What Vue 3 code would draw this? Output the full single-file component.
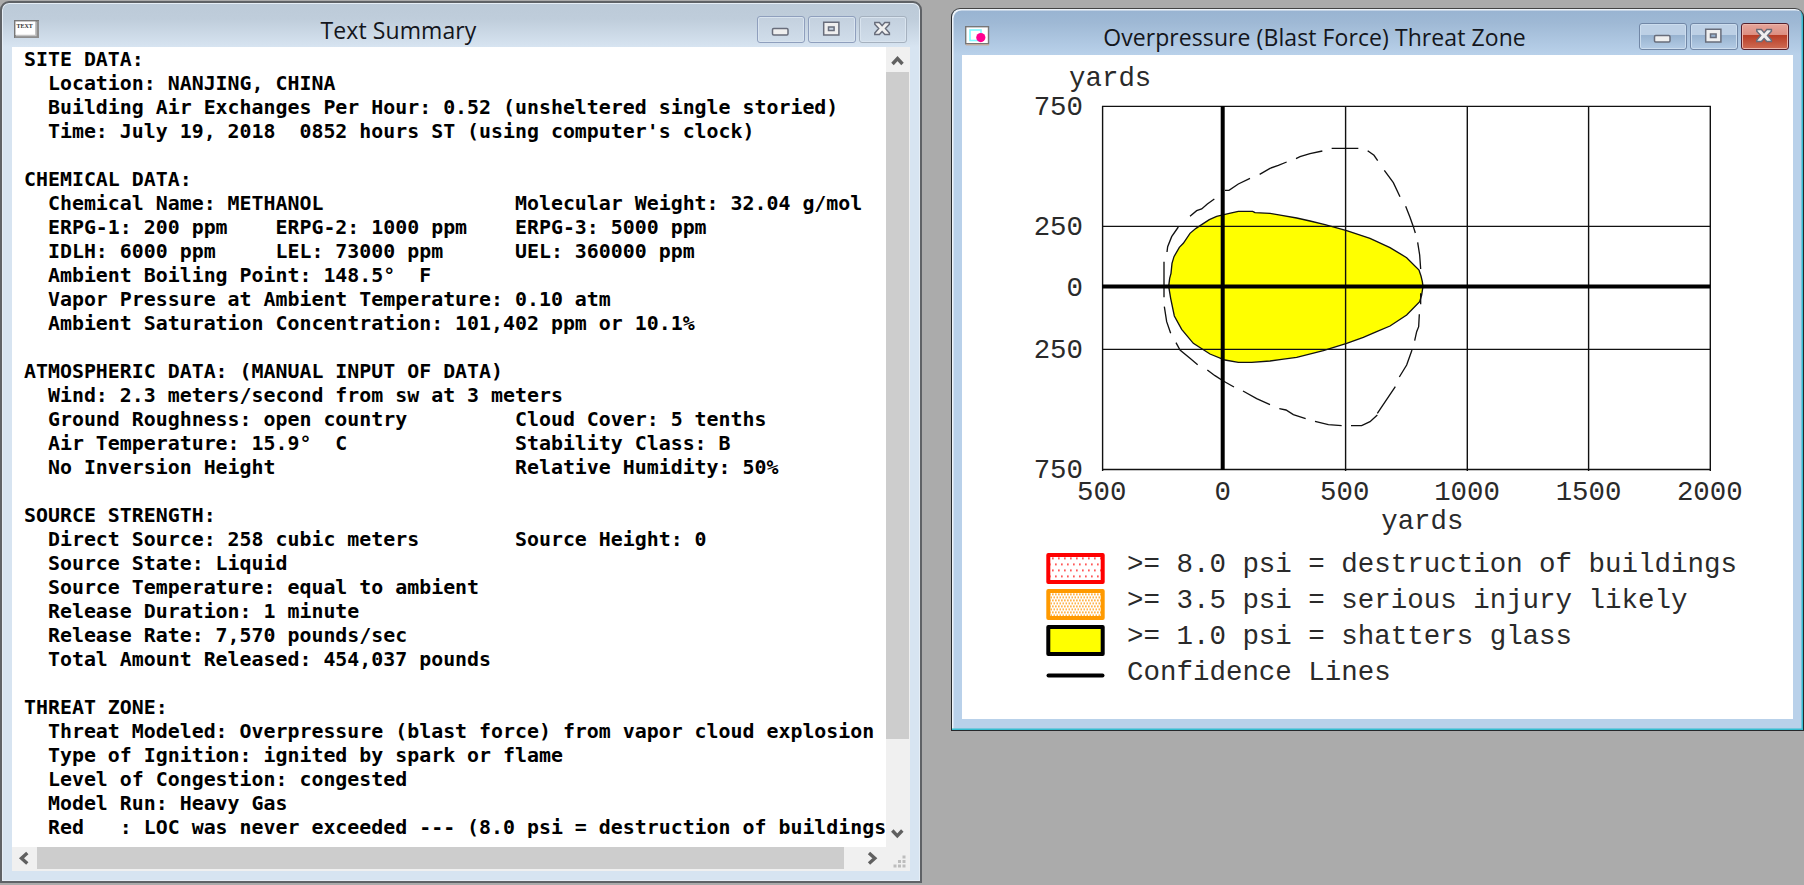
<script setup>
const summary = `SITE DATA:
  Location: NANJING, CHINA
  Building Air Exchanges Per Hour: 0.52 (unsheltered single storied)
  Time: July 19, 2018  0852 hours ST (using computer's clock)

CHEMICAL DATA:
  Chemical Name: METHANOL                Molecular Weight: 32.04 g/mol
  ERPG-1: 200 ppm    ERPG-2: 1000 ppm    ERPG-3: 5000 ppm
  IDLH: 6000 ppm     LEL: 73000 ppm      UEL: 360000 ppm
  Ambient Boiling Point: 148.5°  F
  Vapor Pressure at Ambient Temperature: 0.10 atm
  Ambient Saturation Concentration: 101,402 ppm or 10.1%

ATMOSPHERIC DATA: (MANUAL INPUT OF DATA)
  Wind: 2.3 meters/second from sw at 3 meters
  Ground Roughness: open country         Cloud Cover: 5 tenths
  Air Temperature: 15.9°  C              Stability Class: B
  No Inversion Height                    Relative Humidity: 50%

SOURCE STRENGTH:
  Direct Source: 258 cubic meters        Source Height: 0
  Source State: Liquid
  Source Temperature: equal to ambient
  Release Duration: 1 minute
  Release Rate: 7,570 pounds/sec
  Total Amount Released: 454,037 pounds

THREAT ZONE:
  Threat Modeled: Overpressure (blast force) from vapor cloud explosion
  Type of Ignition: ignited by spark or flame
  Level of Congestion: congested
  Model Run: Heavy Gas
  Red   : LOC was never exceeded --- (8.0 psi = destruction of buildings`

const yLabels = [
  { t: '750', y: 114.5 },
  { t: '250', y: 234.5 },
  { t: '0', y: 295.7 },
  { t: '250', y: 357.8 },
  { t: '750', y: 477.5 },
]
const xLabels = [
  { t: '500', x: 1101.7 },
  { t: '0', x: 1222.7 },
  { t: '500', x: 1344.7 },
  { t: '1000', x: 1467 },
  { t: '1500', x: 1588.5 },
  { t: '2000', x: 1709.8 },
]
const legend = [
  { kind: 'red', t: '>= 8.0 psi = destruction of buildings' },
  { kind: 'orange', t: '>= 3.5 psi = serious injury likely' },
  { kind: 'yellow', t: '>= 1.0 psi = shatters glass' },
  { kind: 'line', t: 'Confidence Lines' },
]
const windowButtons = ['min', 'max', 'close']
</script>

<template>
  <div class="desktop">
    <section class="win summary">
      <header class="bar">
        <svg class="icon" width="26" height="19" viewBox="0 0 26 19">
          <rect x="0" y="0" width="25" height="18" fill="#8d8d8d" />
          <path d="M0 18V0H25" fill="none" stroke="#777" stroke-width="2" />
          <rect x="1.5" y="1.5" width="20" height="13.5" fill="#fff" />
          <path d="M22 2V15.5H2" fill="none" stroke="#c4c4c4" stroke-width="1.3" />
          <text x="2.5" y="7.6" class="icon-text">TEXT</text>
        </svg>
        <h1 class="title">Text Summary</h1>
        <div class="controls">
          <span v-for="b in windowButtons" :key="b" class="ctl" :class="b">
            <svg width="48" height="27" viewBox="0 0 48 27">
              <rect v-if="b === 'min'" x="15.5" y="12.5" width="15.5" height="6.5" rx="1.2" class="glyph" />
              <path v-else-if="b === 'max'" d="M15.7 6.3h15.2v12.6H15.7zM20.5 11v3.6h5.6V11z" fill-rule="evenodd" class="glyph" />
              <path v-else d="M15.8 6.6h4.6l2.7 3.1 2.7-3.1h4.6v1.7l-3.9 4.3 3.9 4.4v1.6h-4.6l-2.7-3-2.7 3h-4.6V17l3.9-4.4-3.9-4.3z" class="glyph" />
            </svg>
          </span>
        </div>
      </header>
      <div class="client">
        <pre class="report">{{ summary }}</pre>
        <div class="vscroll">
          <svg class="arrow up" width="24" height="25" viewBox="0 0 24 25"><path d="M6.5 17L11.5 11.5L16.5 17" /></svg>
          <div class="vthumb"></div>
          <svg class="arrow down" width="24" height="25" viewBox="0 0 24 25"><path d="M6.3 8.5L11.3 13.8L16.3 8.5" /></svg>
        </div>
        <div class="hscroll">
          <svg class="arrow" width="25" height="23" viewBox="0 0 25 23"><path d="M15.3 6L9.5 11.2L15.3 16.4" /></svg>
          <div class="hthumb"></div>
          <svg class="arrow" width="42" height="23" viewBox="0 0 42 23"><path d="M25 6L30.8 11.2L25 16.4" /></svg>
        </div>
        <svg class="grip" width="24" height="23" viewBox="0 0 24 23">
          <g fill="#bdbdbd">
            <rect x="16.5" y="8.5" width="3" height="3" />
            <rect x="12" y="13" width="3" height="3" /><rect x="16.5" y="13" width="3" height="3" />
            <rect x="7.5" y="17.5" width="3" height="3" /><rect x="12" y="17.5" width="3" height="3" /><rect x="16.5" y="17.5" width="3" height="3" />
          </g>
        </svg>
      </div>
    </section>

    <section class="win threat">
      <header class="bar">
        <svg class="icon" width="25" height="20" viewBox="0 0 25 20">
          <rect x="0.7" y="0.7" width="22.8" height="17" fill="#fff" stroke="#777" stroke-width="1.4" />
          <path d="M1 18.8H24" stroke="#c9aa94" stroke-width="1.2" />
          <rect x="5" y="4" width="11" height="10.5" fill="none" stroke="#7ff8ff" stroke-width="1.6" />
          <circle cx="15.8" cy="11.6" r="4.6" fill="#ff0090" />
        </svg>
        <h1 class="title">Overpressure (Blast Force) Threat Zone</h1>
        <div class="controls">
          <span v-for="b in windowButtons" :key="b" class="ctl" :class="b">
            <svg width="48" height="27" viewBox="0 0 48 27">
              <rect v-if="b === 'min'" x="15.5" y="12.5" width="15.5" height="6.5" rx="1.2" class="glyph" />
              <path v-else-if="b === 'max'" d="M15.7 6.3h15.2v12.6H15.7zM20.5 11v3.6h5.6V11z" fill-rule="evenodd" class="glyph" />
              <path v-else d="M15.8 6.6h4.6l2.7 3.1 2.7-3.1h4.6v1.7l-3.9 4.3 3.9 4.4v1.6h-4.6l-2.7-3-2.7 3h-4.6V17l3.9-4.4-3.9-4.3z" class="glyph" />
            </svg>
          </span>
        </div>
      </header>
      <div class="plot">
        <svg class="chart" width="829" height="491" viewBox="962 55 829 491">
          <g transform="translate(1020 80) scale(.33333)" class="zones">
            <path class="zone" d="M446 619L449 595 453 580 456 550 462 530 478 502 490 490 510 460 528 445 545 434 568 419 590 409 628 400 655 394 698 394 705 398 750 400 785 406 830 414 870 423 915 434 980 452 1050 475 1110 503 1160 533 1197 570 1203 588 1207 605 1209 619 1205 645 1199 665 1160 705 1110 738 1070 755 1030 772 980 790 910 812 830 832 785 838 750 843 695 847 655 847 615 840 570 822 520 790 485 748 463 708 452 655Z" />
            <path class="dash" d="M510 409L530 392 545 387 562 372 583 357M615 331L627 331 655 312 690 295M719 283L750 265 775 256 800 246M828 236L840 230 870 221 907 213M935 205L1015 205M1043 212L1062 226 1073 242M1093 271L1120 308 1140 350M1157 379L1170 412 1180 440 1186 459M1193 487L1199 525 1202 567M1202 640L1202 673M1198 703L1196 740 1190 755 1184 782M1176 810L1160 855 1138 891M1126 920L1072 1000M1072 1005L1050 1025 1025 1037 993 1037M965 1037L925 1034 885 1024M857 1016L820 1004 798 990 778 986M750 974L710 956 669 933M642 921L610 903 585 887 562 870M533 854L510 835 480 810 468 788M452 760L440 725 433 680M432 652L432 545M441 516L443 500 455 470 475 441" />
          </g>
          <g class="grid">
            <path d="M1102.6 106V471M1345.6 106V471M1467.3 106V471M1588.6 106V471M1710.3 106V471" />
            <path d="M1102 106.4H1710.9M1102 226.4H1710.9M1102 349.4H1710.9M1102 469.5H1710.9" />
            <path class="axis" d="M1222.7 106V470M1102 286.4H1710" />
          </g>
          <g class="label">
            <text x="1110.2" y="86.2" text-anchor="middle">yards</text>
            <text v-for="(l, i) in yLabels" :key="'y' + i" x="1083" :y="l.y" text-anchor="end">{{ l.t }}</text>
            <text v-for="(l, i) in xLabels" :key="'x' + i" :x="l.x" y="500.2" text-anchor="middle">{{ l.t }}</text>
            <text x="1422.3" y="528.8" text-anchor="middle">yards</text>
          </g>
        </svg>
        <ul class="legend">
          <li v-for="item in legend" :key="item.kind">
            <svg width="60" height="36" viewBox="0 0 60 36">
              <defs>
                <pattern id="dots-red" width="6" height="12" patternUnits="userSpaceOnUse" x="6" y="7.5">
                  <rect x="0" y="0" width="1.7" height="1.7" fill="#ff3b3b" />
                  <rect x="3" y="6" width="1.7" height="1.7" fill="#ff3b3b" />
                </pattern>
                <pattern id="dots-orange" width="3" height="6" patternUnits="userSpaceOnUse" x="6" y="7.5">
                  <rect x="0" y="0" width="1.7" height="1.7" fill="#ffa62b" />
                  <rect x="1.5" y="3" width="1.5" height="1.7" fill="#ffa62b" />
                </pattern>
              </defs>
              <rect v-if="item.kind !== 'line'" x="2.3" y="4.9" width="54.4" height="27.2" stroke-width="4" stroke-linejoin="round" :class="item.kind" />
              <path v-else d="M2.5 17.4H56.5" stroke="#000" stroke-width="4" stroke-linecap="round" />
            </svg>
            <span>{{ item.t }}</span>
          </li>
        </ul>
      </div>
    </section>
  </div>
</template>

<style>
html,
body {
  margin: 0;
  overflow: hidden;
}
</style>

<style scoped>
.desktop {
  display: flex;
  align-items: flex-start;
  justify-content: space-between;
  width: 1804px;
  height: 885px;
  box-sizing: border-box;
  padding-top: 1px;
  background: #ababab;
  overflow: hidden;
}
.win {
  box-sizing: border-box;
  display: flex;
  flex-direction: column;
}
.summary {
  width: 922px;
  height: 882px;
  border: 2px solid #5f6266;
  border-radius: 9px 9px 0 0;
  padding: 0 10px 10px;
  background: linear-gradient(#bccad8 0, #bfcddb 16px, #d7e4f1 44px);
  box-shadow: inset 0 0 0 1px #e6eef6;
}
.threat {
  width: 853px;
  height: 723px;
  margin-top: 7px;
  border: 1.5px solid #26282b;
  border-top-color: #444;
  border-radius: 9px 9px 0 0;
  padding: 0 10px 11px;
  background: linear-gradient(#98b3d1 0, #9fb9d5 14px, #b9d1ea 46px);
  box-shadow: inset -1.5px -1.5px 0 #35bdd0, inset 1.5px 1.5px 0 #eef4fa;
}
.bar {
  display: flex;
  flex: none;
  align-items: flex-start;
  height: 44px;
  box-sizing: border-box;
}
.threat .bar {
  height: 46px;
}
.icon {
  flex: none;
  margin: 17px 0 0 2px;
}
.threat .icon {
  margin: 17px 0 0 3px;
}
.icon-text {
  font: bold 6px "Liberation Serif", serif;
  fill: #333;
}
.title {
  flex: 1;
  margin: 12px 0 0;
  text-align: center;
  font: 400 23px/30px "Open Sans", "Noto Sans", sans-serif;
  letter-spacing: 0.08px;
  color: #14161c;
  white-space: nowrap;
}
.threat .title {
  margin-top: 13px;
}
.controls {
  display: flex;
  gap: 3px;
  margin: 13px 3px 0 0;
}
.threat .controls {
  margin: 14px 4px 0 0;
}
.ctl {
  width: 48px;
  height: 27px;
  box-sizing: border-box;
  border: 1.5px solid #8f9fbd;
  border-radius: 3px;
  background: linear-gradient(#c3d0de, #d0ddea);
  box-shadow: inset 0 0 0 1px #d9e4ef;
}
.summary .close {
  border-color: #a5b1bf;
}
.ctl svg {
  display: block;
  margin: -1px;
}
.glyph {
  fill: #efefef;
  stroke: #686d7b;
  stroke-width: 1.5;
}
.threat .ctl {
  border-color: #7187a6;
  background: linear-gradient(#bdd0e5 0 45%, #98b3d0 46%, #b4cce5);
  box-shadow: inset 0 0 0 1px #ccddee;
}
.threat .close {
  border-color: #54202c;
  background: linear-gradient(#e5a59b 0, #dc8d80 45%, #b83d26 46%, #cf6c54);
  box-shadow: inset 0 0 0 1px #edb5aa;
}
.client {
  flex: 1;
  min-height: 0;
  display: grid;
  grid-template-columns: 874px 24px;
  grid-template-rows: 800px 24px;
  background: #f0f0f0;
}
.report {
  margin: 0;
  padding: 1px 0 0 12px;
  overflow: hidden;
  background: #fff;
  color: #000;
  font: bold 19.9px/24px "DejaVu Sans Mono", monospace;
}
.vscroll {
  display: flex;
  flex-direction: column;
  height: 800px;
}
.vthumb {
  width: 23px;
  height: 667px;
  background: #cdcdcd;
}
.down {
  margin-top: auto;
}
.hscroll {
  display: flex;
}
.hthumb {
  width: 807px;
  height: 22px;
  background: #cdcdcd;
}
.arrow {
  flex: none;
}
.arrow path {
  fill: none;
  stroke: #606060;
  stroke-width: 3.4;
}
.plot {
  flex: 1;
  min-height: 0;
  background: #fff;
}
.chart {
  display: block;
}
.zone {
  fill: #ff0;
}
.zones path {
  stroke: #111;
  stroke-width: 4;
}
.zones .dash {
  fill: none;
}
.grid path {
  stroke: #111;
  stroke-width: 1.4;
  fill: none;
}
.grid .axis {
  stroke: #000;
  stroke-width: 4;
}
.label text {
  font: 27.4px "Liberation Mono", monospace;
  fill: #2a2a2a;
}
.legend {
  list-style: none;
  margin: 4px 0 0 84px;
  padding: 0;
}
.legend li {
  display: flex;
  height: 36px;
  gap: 21px;
}
.legend span {
  font: 27.48px/30px "Liberation Mono", monospace;
  color: #2a2a2a;
  white-space: pre;
}
.red {
  fill: url(#dots-red);
  stroke: #f00;
}
.orange {
  fill: url(#dots-orange);
  stroke: #ff9a00;
}
.yellow {
  fill: #ff0;
  stroke: #000;
}
</style>
